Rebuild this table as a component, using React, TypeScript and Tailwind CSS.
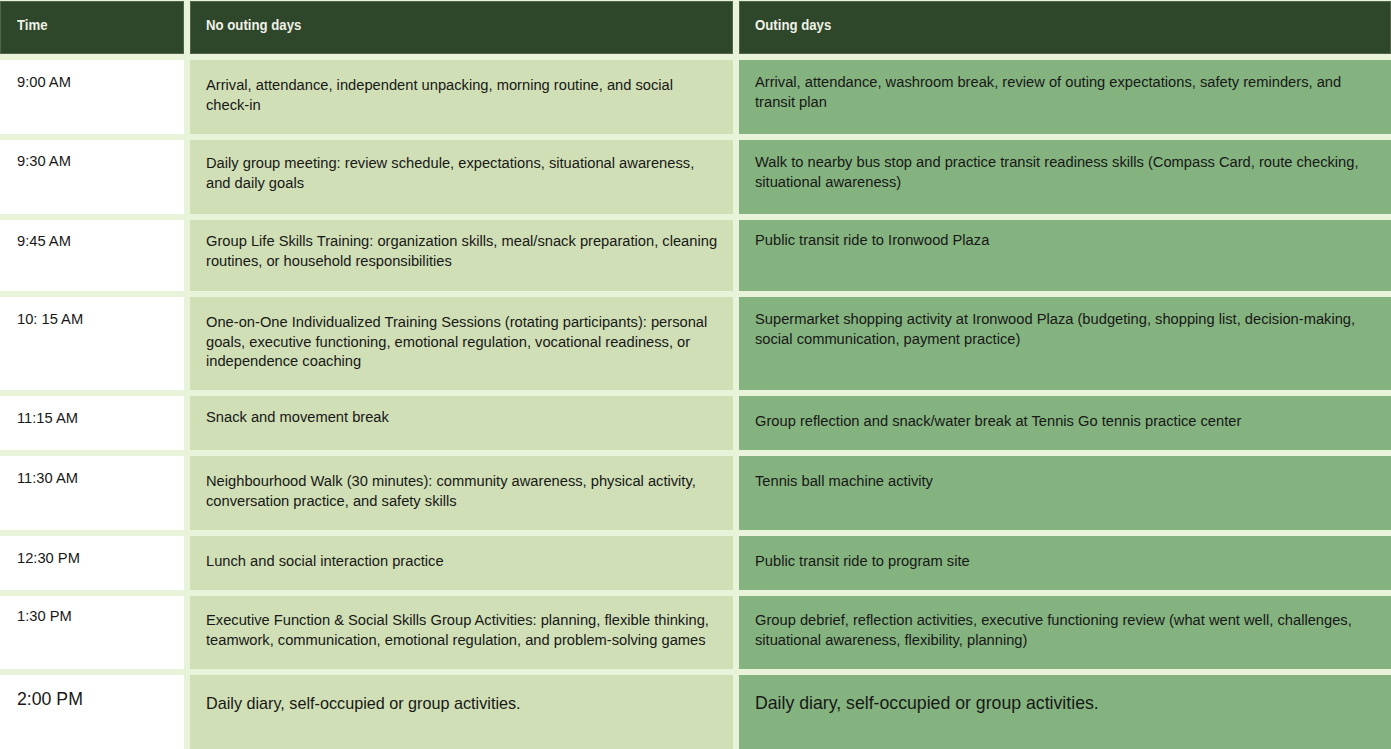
import React from 'react'

type Row = {
  time: string
  noOuting: string
  outing: string
  h: string
  pt: [string, string, string]
  big?: boolean
}

const rows: Row[] = [
  {
    time: '9:00 AM',
    noOuting: 'Arrival, attendance, independent unpacking, morning routine, and social check-in',
    outing: 'Arrival, attendance, washroom break, review of outing expectations, safety reminders, and transit plan',
    h: 'h-[74px]',
    pt: ['pt-[12px]', 'pt-[16px]', 'pt-[13px]'],
  },
  {
    time: '9:30 AM',
    noOuting: 'Daily group meeting: review schedule, expectations, situational awareness, and daily goals',
    outing: 'Walk to nearby bus stop and practice transit readiness skills (Compass Card, route checking, situational awareness)',
    h: 'h-[74px]',
    pt: ['pt-[11px]', 'pt-[14px]', 'pt-[13px]'],
  },
  {
    time: '9:45 AM',
    noOuting: 'Group Life Skills Training: organization skills, meal/snack preparation, cleaning routines, or household responsibilities',
    outing: 'Public transit ride to Ironwood Plaza',
    h: 'h-[71px]',
    pt: ['pt-[11px]', 'pt-[12px]', 'pt-[11px]'],
  },
  {
    time: '10: 15 AM',
    noOuting: 'One-on-One Individualized Training Sessions (rotating participants): personal goals, executive functioning, emotional regulation, vocational readiness, or independence coaching',
    outing: 'Supermarket shopping activity at Ironwood Plaza (budgeting, shopping list, decision-making, social communication, payment practice)',
    h: 'h-[93px]',
    pt: ['pt-[12px]', 'pt-[16px]', 'pt-[13px]'],
  },
  {
    time: '11:15 AM',
    noOuting: 'Snack and movement break',
    outing: 'Group reflection and snack/water break at Tennis Go tennis practice center',
    h: 'h-[54px]',
    pt: ['pt-[12px]', 'pt-[12px]', 'pt-[16px]'],
  },
  {
    time: '11:30 AM',
    noOuting: 'Neighbourhood Walk (30 minutes): community awareness, physical activity, conversation practice, and safety skills',
    outing: 'Tennis ball machine activity',
    h: 'h-[74px]',
    pt: ['pt-[12px]', 'pt-[16px]', 'pt-[16px]'],
  },
  {
    time: '12:30 PM',
    noOuting: 'Lunch and social interaction practice',
    outing: 'Public transit ride to program site',
    h: 'h-[54px]',
    pt: ['pt-[12px]', 'pt-[16px]', 'pt-[16px]'],
  },
  {
    time: '1:30 PM',
    noOuting: 'Executive Function & Social Skills Group Activities: planning, flexible thinking, teamwork, communication, emotional regulation, and problem-solving games',
    outing: 'Group debrief, reflection activities, executive functioning review (what went well, challenges, situational awareness, flexibility, planning)',
    h: 'h-[73px]',
    pt: ['pt-[10px]', 'pt-[15px]', 'pt-[15px]'],
  },
  {
    time: '2:00 PM',
    noOuting: 'Daily diary, self-occupied or group activities.',
    outing: 'Daily diary, self-occupied or group activities.',
    h: 'h-[80px]',
    pt: ['pt-[12px]', 'pt-[16px]', 'pt-[16px]'],
    big: true,
  },
]

const body = "font-['Liberation_Sans',Arial,sans-serif] text-[#181818]"
const head =
  "h-[53px] bg-[#2e4629] border border-[#52664a] pt-[13px] text-[15px] leading-[20px] font-bold text-[#eef1e8] font-['Liberation_Sans',Arial,sans-serif] whitespace-nowrap"

export default function App() {
  return (
    <div className="min-h-screen bg-[#e9f3da] pt-px overflow-hidden">
      <div className="grid grid-cols-[184px_543px_652px] gap-[6px]">
        <div className={`${head} pl-[16px]`}>
          <span className="inline-block origin-left scale-x-[0.88]">Time</span>
        </div>
        <div className={`${head} pl-[15px]`}>
          <span className="inline-block origin-left scale-x-[0.88]">No outing days</span>
        </div>
        <div className={`${head} pl-[15px]`}>
          <span className="inline-block origin-left scale-x-[0.88]">Outing days</span>
        </div>

        {rows.map((r) => (
          <React.Fragment key={r.time}>
            <div
              className={`${r.h} ${r.pt[0]} ${body} bg-white pl-[17px] ${
                r.big ? 'text-[17.7px] leading-[24px]' : 'text-[14.7px] leading-[20px]'
              }`}
            >
              {r.time}
            </div>
            <div
              className={`${r.h} ${r.pt[1]} ${body} bg-[#d0dfb5] pl-[16px] pr-[13px] ${
                r.big ? 'text-[16.2px] leading-[24px]' : 'text-[14.7px] leading-[19.5px]'
              }`}
            >
              {r.noOuting}
            </div>
            <div
              className={`${r.h} ${r.pt[2]} ${body} bg-[#84b37f] pl-[16px] pr-[20px] ${
                r.big ? 'text-[17.7px] leading-[24px]' : 'text-[14.7px] leading-[19.5px]'
              }`}
            >
              {r.outing}
            </div>
          </React.Fragment>
        ))}
      </div>
    </div>
  )
}
